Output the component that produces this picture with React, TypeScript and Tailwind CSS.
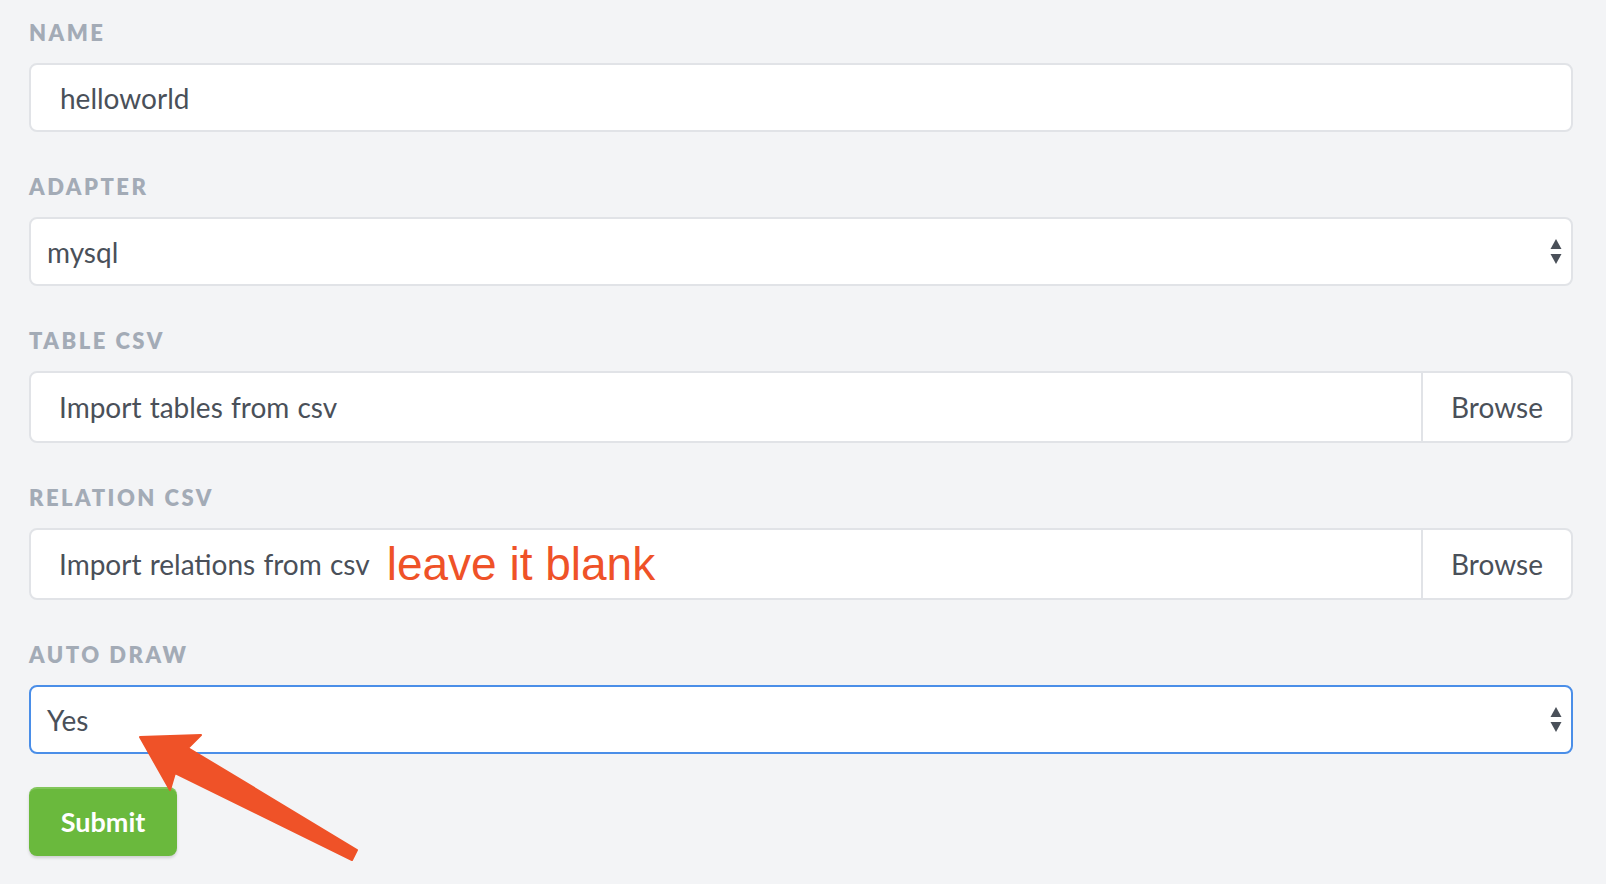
import React from "react";

const labelCls =
  "h-[24px] flex items-center text-[22px] font-extrabold tracking-[2.5px] text-[#a3abb6] uppercase";
const boxText = "text-[28px] [word-spacing:1px] text-[#4a5059]";

function Label({ children }: { children: React.ReactNode }) {
  return <div className={labelCls}>{children}</div>;
}

// up/down arrows drawn the way the native select does
function SelectArrows() {
  return (
    <svg width="12" height="26" viewBox="0 0 12 26" className="shrink-0">
      <polygon points="6,0 11.5,10 0.5,10" fill="#4a5059" />
      <polygon points="0.5,15 11.5,15 6,25" fill="#4a5059" />
    </svg>
  );
}

function SelectBox({ value, focused }: { value: string; focused?: boolean }) {
  return (
    <div
      className={`h-[69px] flex items-center justify-between rounded-[8px] bg-white pl-[16px] pr-[9px] border-2 ${
        focused ? "border-[#4a8ee8]" : "border-[#e1e3e7]"
      }`}
    >
      <span className={boxText}>{value}</span>
      <SelectArrows />
    </div>
  );
}

function FileBox({ placeholder, note }: { placeholder: string; note?: string }) {
  return (
    <div className="h-[72px] flex rounded-[8px] bg-white border-2 border-[#e1e3e7] overflow-hidden">
      <div className="flex-1 flex items-center pl-[28px]">
        <span className={boxText}>{placeholder}</span>
        {note && (
          <span className="ml-[17px] text-[46px] leading-none text-[#ef5228] font-['Liberation_Sans',Arial,sans-serif]">
            {note}
          </span>
        )}
      </div>
      <div className="w-[150px] flex items-center justify-center border-l-2 border-[#e1e3e7]">
        <span className={boxText}>Browse</span>
      </div>
    </div>
  );
}

export default function App() {
  return (
    <div className="relative min-h-screen bg-[#f3f4f6] font-['Lato',sans-serif]">
      <form className="flex flex-col pl-[29px] pr-[33px] pt-[20px]">
        <Label>Name</Label>
        <div className="mt-[19px] h-[69px] flex items-center rounded-[8px] bg-white border-2 border-[#e1e3e7] pl-[29px]">
          <span className={boxText}>helloworld</span>
        </div>

        <div className="mt-[42px]">
          <Label>Adapter</Label>
        </div>
        <div className="mt-[19px]">
          <SelectBox value="mysql" />
        </div>

        <div className="mt-[42px]">
          <Label>Table CSV</Label>
        </div>
        <div className="mt-[19px]">
          <FileBox placeholder="Import tables from csv" />
        </div>

        <div className="mt-[42px]">
          <Label>Relation CSV</Label>
        </div>
        <div className="mt-[19px]">
          <FileBox placeholder="Import relations from csv" note="leave it blank" />
        </div>

        <div className="mt-[42px]">
          <Label>Auto Draw</Label>
        </div>
        <div className="mt-[19px]">
          <SelectBox value="Yes" focused />
        </div>

        <div className="mt-[33px]">
          <button
            type="button"
            className="h-[69px] w-[148px] rounded-[8px] bg-[#6ab93d] text-white text-[27px] font-bold border-t-2 border-[#82c65b] shadow-[0_2px_3px_rgba(0,0,0,0.15)]"
          >
            Submit
          </button>
        </div>
      </form>

      {/* annotation arrow */}
      <svg
        className="absolute inset-0 pointer-events-none"
        width="1606"
        height="884"
        viewBox="0 0 1606 884"
      >
        <polygon
          points="140,737 201,735 188,748 357,850 352,860 175,773 170,790"
          fill="#ef5228"
          stroke="#ef5228"
          strokeWidth="2"
          strokeLinejoin="round"
        />
      </svg>
    </div>
  );
}
